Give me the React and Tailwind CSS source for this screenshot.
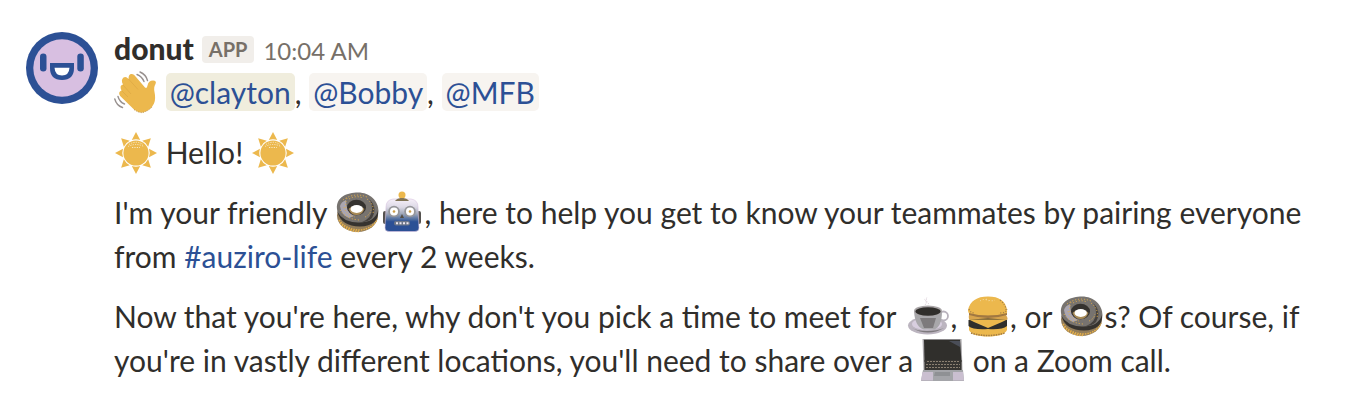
import React from "react";

function Emoji({ label, className = "", children }) {
  return (
    <svg
      role="img"
      aria-label={label}
      viewBox="0 0 44 44"
      className={`inline-block h-11 w-11 align-top ${className}`}
    >
      {children}
    </svg>
  );
}

function Wave() {
  return (
    <Emoji label="wave" className="translate-y-px">
      <path
        d="M6.200 25 Q3.500 21 7.500 19.500 Q5 14.500 9 13.500 Q6.500 9 9.500 6.500 Q12 4.800 14.500 8 Q14.500 2.500 18 3 Q20 3 22 6 L31 16.500 Q33 18 33.500 14.500 Q34.500 9.500 39 9.500 Q43 9.800 41.500 13 Q39.500 16 40.500 21 Q42 28 40 32.500 Q37 39 29 41.500 Q25 42.200 20 38.500 Z"
        fill="#ecb84d"
      />
      <path
        d="M9 14 L17 23 M14.500 8 L24 18.500 M8 20 L14 26"
        fill="none"
        stroke="#dca744"
        strokeWidth=".7"
      />
      <path d="M20 38.500 Q25 42.200 29 41.500 Q35 39.500 38 36" fill="none" stroke="#b58b42" strokeWidth=".8" strokeDasharray="1.200 1.200" />
      <path
        d="M23 3.500 Q28 5.500 30 10.500 M26 1 Q32 3.500 33.500 9.500 M4 25.500 Q5.500 31 10.500 33 M.8 28 Q2.500 34.500 8.500 36.500"
        fill="none"
        stroke="#98918f"
        strokeWidth="1.400"
        strokeLinecap="round"
      />
    </Emoji>
  );
}

function Sun() {
  return (
    <Emoji label="sunny" className="translate-y-px">
      <g fill="#ecb84d">
        {[0, 45, 90, 135, 180, 225, 270, 315].map((angle) => (
          <path key={angle} d="M17.800 9 L22 1 L26.200 9 Q22 7.500 17.800 9Z" transform={`rotate(${angle} 22 22)`} />
        ))}
      </g>
      <circle cx="22" cy="22" r="12.600" fill="#ecb84d" />
      <path
        d="M15 13.500 Q22 9 29 13.500 M14 15.500 Q22 11.500 30 15.500 M18 16.500 H26"
        fill="none"
        stroke="#f8e8c3"
        strokeWidth="1"
        strokeDasharray="1.200 1.200"
      />
    </Emoji>
  );
}

function Donut({ className = "" }) {
  return (
    <Emoji label="doughnut" className={`translate-y-px ${className}`}>
      <ellipse cx="21.500" cy="24.500" rx="20.500" ry="16.500" fill="#937d5a" />
      <path
        d="M3 29 Q10 39 24 39 Q37 38 41 28 M4 32 Q12 41 24 40.500"
        fill="none"
        stroke="#e5b04c"
        strokeWidth="1.600"
        strokeDasharray="1.500 1"
      />
      <path
        d="M1 18 C0 6 11 1.500 22 1.500 C34 1.500 42.500 10 42.500 20 C42.500 30 34 33 23 33 C9 33 1.500 26 1 18Z"
        fill="#77736f"
      />
      <path d="M1.500 21 Q7 31 22 31.500 Q38 32 42 20 Q43 35 24 35.500 Q5 35 1.500 21" fill="#36332f" />
      <path d="M33 8 Q42 16 36 27 Q32 31 26 31 Q36 27 36 18 Q36 12 33 8" fill="#45413d" />
      <path d="M4 15 Q5 24 13 27 L18 25 Q10 21 10 9 Q5 11 4 15" fill="#aaa6b1" />
      <path
        d="M7 9 Q18 1 31 6 M4 19 Q10 28 23 29 M31 8 Q39 14 37 23 M13 8 Q20 4 27 7 M29 26 Q34 24 35 19 M8 16 Q10 24 19 26 M11 7 Q9 12 10 17"
        fill="none"
        stroke="#e0ad4c"
        strokeWidth="1"
        strokeDasharray="1.200 1.800"
      />
      <ellipse cx="20.500" cy="16.500" rx="9.500" ry="7.800" fill="#35322f" />
      <path d="M12.500 18 Q15 15 20.500 15 Q26 15 28.500 18 Q26 24.200 20.500 24 Q15 24.200 12.500 18" fill="#a88b58" />
      <ellipse cx="20.700" cy="18" rx="6.200" ry="3.900" fill="#fff" />
    </Emoji>
  );
}

function Robot() {
  return (
    <Emoji label="robot_face" className="translate-y-px">
      <defs>
        <linearGradient id="robotFace" x1="0" y1="0" x2="0" y2="1">
          <stop offset="0" stopColor="#f6eff9" />
          <stop offset=".25" stopColor="#dddae6" />
          <stop offset=".45" stopColor="#a1a8b9" />
          <stop offset=".62" stopColor="#526f9f" />
          <stop offset=".7" stopColor="#2c5095" />
        </linearGradient>
      </defs>
      <path d="M20 5 H24 V10 H20Z" fill="#77736a" />
      <circle cx="22" cy="4" r="3.500" fill="#ecb84d" />
      <rect x="3" y="20" width="4" height="13" rx="2" fill="#55524f" />
      <rect x="37" y="20" width="4" height="13" rx="2" fill="#55524f" />
      <path
        d="M6 16 Q6 9 13 8 H31 Q38 9 38 16 L39 37 Q39 40.500 35 40.500 H9 Q5 40.500 5 37Z"
        fill="url(#robotFace)"
        stroke="#d6c2df"
        strokeWidth=".6"
      />
      <path d="M15 10 Q17 7 22 7 Q27 7 29 10 Z" fill="#807355" />
      <circle cx="14" cy="20.500" r="5.800" fill="#96969a" />
      <circle cx="30" cy="20.500" r="5.800" fill="#96969a" />
      <circle cx="14" cy="20.500" r="4" fill="#fff" />
      <circle cx="30" cy="20.500" r="4" fill="#fff" />
      <circle cx="14" cy="20.500" r="1.300" fill="#cc9d49" />
      <circle cx="30" cy="20.500" r="1.300" fill="#cc9d49" />
      <path d="M20 27 L22 23 L24 27Z" fill="#564d42" />
      <rect x="14" y="30" width="16" height="4.500" rx="2" fill="#6d7788" />
      <path d="M16 32.200 H29" stroke="#eee7f1" strokeWidth="2" strokeDasharray="2 1.500" />
    </Emoji>
  );
}

function Coffee() {
  return (
    <Emoji label="coffee" className="ml-[3px]">
      <ellipse cx="20.500" cy="31.500" rx="19.500" ry="9" fill="#bcb5c0" />
      <ellipse cx="20" cy="30" rx="15" ry="6" fill="#d8cedf" />
      <path d="M5 34 Q21 43 37 34 Q30 37 20 37 Q10 37 5 34" fill="#7d797d" />
      <ellipse cx="36.500" cy="22" rx="4.500" ry="4.500" fill="none" stroke="#b9b3bd" strokeWidth="1.800" />
      <path d="M7 17 Q8 33 17 35.500 H27 Q35 33 35 17Z" fill="#a8a7aa" />
      <path d="M13 24 H29 L26 34 H17Z" fill="#7d7a7c" />
      <ellipse cx="21" cy="17" rx="14" ry="5.500" fill="#a9a5a7" />
      <ellipse cx="21" cy="17.500" rx="12.600" ry="4.200" fill="#302e2b" />
      <path d="M18 11 Q21 8 17 5 M22 10 Q18 7 20 3" fill="none" stroke="#ded3dc" strokeWidth="1" strokeDasharray="1.500 1" />
    </Emoji>
  );
}

function Burger() {
  return (
    <Emoji label="hamburger" className="ml-px translate-y-px">
      <path d="M3 31 H41 V35 Q38 41.500 22 41.500 Q6 41.500 3 35Z" fill="#ecb84d" />
      <path d="M5 38 Q22 43 39 38" fill="none" stroke="#a17b42" strokeWidth="1.500" strokeDasharray="1.500 1" />
      <path d="M3 20 H40 Q43 24 40 26 L5 26 Q2 25 3 20" fill="#d8a54d" />
      <path d="M2.500 25 Q22 22 41 25 V31 Q36 35 22 34 Q7 35 2.500 31Z" fill="#302f2c" />
      <path d="M3 24.500 H41 L36 27 L22 33 L8 27Z" fill="#ecb84d" />
      <path d="M2 15 Q5 1.500 22 1.500 Q39 1.500 41 15 Q42 20 37 20.500 H7 Q2 20 2 15" fill="#ecb84d" />
      <path d="M3 18 Q22 23 41 18 V20 Q22 26 3 20Z" fill="#a17842" />
      <path
        d="M3 14 Q4 18 9 18 M34 18 Q40 18 41 14 M34 5 Q40 10 40 15"
        fill="none"
        stroke="#a98347"
        strokeWidth="1.200"
        strokeDasharray="1.200 1.500"
      />
      <path d="M14 6 Q18 3 23 6 M20 4 Q25 7 29 5" fill="none" stroke="#f7e1ad" strokeWidth="1" strokeDasharray="1 2" />
    </Emoji>
  );
}

function Laptop() {
  return (
    <Emoji label="computer" className="translate-y-px">
      <path d="M1.500 0 H40.500 L41.500 31 H2.500Z" fill="#aaa8ab" />
      <path d="M3 .8 H39 L40.500 23 H3.500Z" fill="#302f2c" />
      <path d="M28 2 H39 V8 Z" fill="#4a4e58" />
      <path d="M3.500 21 H40.500 V31 H3.500Z" fill="#383633" />
      <path
        d="M6 22.500 H38 M5 25.500 H39 M5 28.500 H39"
        stroke="#8b8072"
        strokeWidth="1"
        strokeDasharray="2 1"
      />
      <path d="M2 31 H42 L43 42 H0Z" fill="#a4a5a9" />
      <path d="M1.500 33 H12 V41.500 H0Z M32 33 H42 L43 41.500 H32Z" fill="#cabfd0" />
      <path d="M14 33 H29 V37 H13Z" fill="#8f9194" />
    </Emoji>
  );
}

function Avatar() {
  return (
    <svg viewBox="0 0 72 72" className="h-[72px] w-[72px] shrink-0">
      <circle cx="36" cy="36" r="36" fill="#2c5095" />
      <circle cx="36" cy="36" r="28.700" fill="#d8bfe1" />
      <rect x="14" y="21.500" width="6.500" height="18" rx="3.250" fill="#2c5095" />
      <rect x="51.300" y="21.500" width="6.500" height="18" rx="3.250" fill="#2c5095" />
      <path d="M24 31 H48 V36 Q48 48 36 48 Q24 48 24 36Z" fill="#2c5095" />
      <path d="M28.500 35.700 H43.500 Q43 43.500 36 43.500 Q29 43.500 28.500 35.700Z" fill="#fff" />
    </svg>
  );
}

function Mention({ children, active = false }) {
  return (
    <span
      className={`mt-[3px] inline-block h-[38px] rounded-[5px] px-1 align-top leading-[38px] text-[#2c5095] ${
        active ? "bg-[#f0eddd]" : "bg-[#f7f4f0]"
      }`}
    >
      {children}
    </span>
  );
}

export default function App() {
  return (
    <main className="flex h-[404px] w-[1348px] gap-4 overflow-hidden bg-white pt-8 pl-[26px] font-['Lato',sans-serif] text-[#302e2b]">
      <Avatar />
      <article className="min-w-0 flex-1 text-[30px] leading-[44px] whitespace-nowrap">
        <header className="flex h-[38px] items-baseline leading-[32px]">
          <span className="font-black">donut</span>
          <span className="ml-2 inline-flex h-[27px] -translate-y-[3px] items-center rounded bg-[#f1eeea] px-[7px] text-xl leading-7 font-bold text-[#777068]">
            APP
          </span>
          <time className="ml-[9px] text-2xl leading-[32px] text-[#777068]">10:04 AM</time>
        </header>
        <div className="flex flex-col gap-4">
          <p className="h-11">
            <Wave /> <Mention active>@clayton</Mention>, <Mention>@Bobby</Mention>, <Mention>@MFB</Mention>
          </p>
          <p className="h-11">
            <Sun /> Hello! <Sun />
          </p>
          <p>
            I'm your friendly <Donut className="ml-0.5" />
            <Robot />, here to help you get to know your teammates by pairing everyone
            <br />
            from <a className="text-[#2c5095]">#auziro-life</a> every 2 weeks.
          </p>
          <p>
            Now that you're here, why don't you pick a time to meet for <Coffee />, <Burger />, or{" "}
            <Donut className="mr-px" />
            s? Of course, if
            <br />
            you're in vastly different locations, you'll need to share over a <Laptop /> on a Zoom call.
          </p>
        </div>
      </article>
    </main>
  );
}
